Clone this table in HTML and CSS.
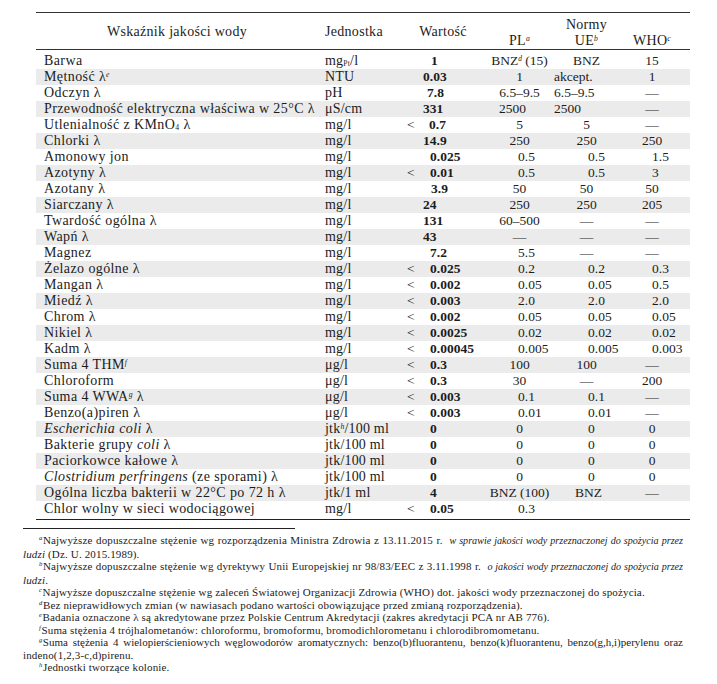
FILE: index.html
```html
<!DOCTYPE html>
<html lang="pl">
<head>
<meta charset="utf-8">
<title>Wskaźnik jakości wody</title>
<link rel="stylesheet" href="styles.css">
</head>
<body>
<div class="page">
<table class="tbl">
  <colgroup>
    <col class="w1"><col class="w2"><col class="w3"><col class="w4"><col class="w5"><col class="w6"><col class="w7">
  </colgroup>
  <thead>
    <tr class="h1">
      <th rowspan="2" class="hc">Wskaźnik jakości wody</th>
      <th rowspan="2" class="hl">Jednostka</th>
      <th rowspan="2" colspan="2" class="hc">Wartość</th>
      <th></th>
      <th class="hb">Normy</th>
      <th></th>
    </tr>
    <tr class="h2">
      <th class="ht">PL<sup>a</sup></th>
      <th class="ht">UE<sup>b</sup></th>
      <th class="ht who">WHO<sup>c</sup></th>
    </tr>
  </thead>
  <tbody>
    <tr><td>Barwa</td><td>mg<sub>Pt</sub>/l</td><td></td><td class="v p13">1</td><td class="c">BNZ<sup>d</sup> (15)</td><td class="c">BNZ</td><td class="c who">15</td></tr>
    <tr><td>Mętność λ<sup>e</sup></td><td>NTU</td><td></td><td class="v p5">0.03</td><td class="c">1</td><td class="u0">akcept.</td><td class="c who">1</td></tr>
    <tr><td>Odczyn λ</td><td>pH</td><td></td><td class="v p9">7.8</td><td class="c">6.5–9.5</td><td class="u0">6.5–9.5</td><td class="c who">—</td></tr>
    <tr><td>Przewodność elektryczna właściwa w 25°C λ</td><td>μS/cm</td><td></td><td class="v p5">331</td><td class="pl13">2500</td><td class="u0">2500</td><td class="c who">—</td></tr>
    <tr><td>Utlenialność z KMnO<sub>4</sub> λ</td><td>mg/l</td><td class="lt">&lt;</td><td class="v p11">0.7</td><td class="c">5</td><td class="c">5</td><td class="c who">—</td></tr>
    <tr><td>Chlorki λ</td><td>mg/l</td><td></td><td class="v p5">14.9</td><td class="c">250</td><td class="c">250</td><td class="c who">250</td></tr>
    <tr><td>Amonowy jon</td><td>mg/l</td><td></td><td class="v p12">0.025</td><td class="pl">0.5</td><td class="ul">0.5</td><td class="wl">1.5</td></tr>
    <tr><td>Azotyny λ</td><td>mg/l</td><td class="lt">&lt;</td><td class="v p12">0.01</td><td class="pl">0.5</td><td class="ul">0.5</td><td class="wl">3</td></tr>
    <tr><td>Azotany λ</td><td>mg/l</td><td></td><td class="v p13">3.9</td><td class="c">50</td><td class="c">50</td><td class="c who">50</td></tr>
    <tr><td>Siarczany λ</td><td>mg/l</td><td></td><td class="v p5">24</td><td class="c">250</td><td class="c">250</td><td class="c who">205</td></tr>
    <tr><td>Twardość ogólna λ</td><td>mg/l</td><td></td><td class="v p5">131</td><td class="c">60–500</td><td class="c">—</td><td class="c who">—</td></tr>
    <tr><td>Wapń λ</td><td>mg/l</td><td></td><td class="v p5">43</td><td class="c">—</td><td class="c">—</td><td class="c who">—</td></tr>
    <tr><td>Magnez</td><td>mg/l</td><td></td><td class="v p12">7.2</td><td class="pl">5.5</td><td class="c">—</td><td class="c who">—</td></tr>
    <tr><td>Żelazo ogólne λ</td><td>mg/l</td><td class="lt">&lt;</td><td class="v p12">0.025</td><td class="pl">0.2</td><td class="ul">0.2</td><td class="wl">0.3</td></tr>
    <tr><td>Mangan λ</td><td>mg/l</td><td class="lt">&lt;</td><td class="v p12">0.002</td><td class="pl">0.05</td><td class="ul">0.05</td><td class="wl">0.5</td></tr>
    <tr><td>Miedź λ</td><td>mg/l</td><td class="lt">&lt;</td><td class="v p12">0.003</td><td class="pl">2.0</td><td class="ul">2.0</td><td class="wl">2.0</td></tr>
    <tr><td>Chrom λ</td><td>mg/l</td><td class="lt">&lt;</td><td class="v p12">0.002</td><td class="pl">0.05</td><td class="ul">0.05</td><td class="wl">0.05</td></tr>
    <tr><td>Nikiel λ</td><td>mg/l</td><td class="lt">&lt;</td><td class="v p12">0.0025</td><td class="pl">0.02</td><td class="ul">0.02</td><td class="wl">0.02</td></tr>
    <tr><td>Kadm λ</td><td>mg/l</td><td class="lt">&lt;</td><td class="v p12">0.00045</td><td class="pl">0.005</td><td class="ul">0.005</td><td class="wl">0.003</td></tr>
    <tr><td>Suma 4 THM<sup>f</sup></td><td>μg/l</td><td class="lt">&lt;</td><td class="v p12">0.3</td><td class="c">100</td><td class="c">100</td><td class="c who">—</td></tr>
    <tr><td>Chloroform</td><td>μg/l</td><td class="lt">&lt;</td><td class="v p12">0.3</td><td class="c">30</td><td class="c">—</td><td class="c who">200</td></tr>
    <tr><td>Suma 4 WWA<sup>g</sup> λ</td><td>μg/l</td><td class="lt">&lt;</td><td class="v p12">0.003</td><td class="pl">0.1</td><td class="ul">0.1</td><td class="c who">—</td></tr>
    <tr><td>Benzo(a)piren λ</td><td>μg/l</td><td class="lt">&lt;</td><td class="v p12">0.003</td><td class="pl">0.01</td><td class="ul">0.01</td><td class="c who">—</td></tr>
    <tr><td><i>Escherichia coli</i> λ</td><td>jtk<sup>h</sup>/100 ml</td><td></td><td class="v p12">0</td><td class="c">0</td><td class="ul">0</td><td class="c who">0</td></tr>
    <tr><td>Bakterie grupy <i>coli</i> λ</td><td>jtk/100 ml</td><td></td><td class="v p12">0</td><td class="c">0</td><td class="ul">0</td><td class="c who">0</td></tr>
    <tr><td>Paciorkowce kałowe λ</td><td>jtk/100 ml</td><td></td><td class="v p12">0</td><td class="c">0</td><td class="ul">0</td><td class="c who">0</td></tr>
    <tr><td><i>Clostridium perfringens</i> (ze sporami) λ</td><td>jtk/100 ml</td><td></td><td class="v p12">0</td><td class="c">0</td><td class="ul">0</td><td class="c who">0</td></tr>
    <tr><td>Ogólna liczba bakterii w 22°C po 72 h λ</td><td>jtk/1 ml</td><td></td><td class="v p12">4</td><td class="c">BNZ (100)</td><td class="u22">BNZ</td><td class="c who">—</td></tr>
    <tr><td>Chlor wolny w sieci wodociągowej</td><td>mg/l</td><td class="lt">&lt;</td><td class="v p12">0.05</td><td class="pl">0.3</td><td></td><td></td></tr>
  </tbody>
</table>

<div class="notes">
  <p><span class="l1"><sup>a</sup>Najwyższe dopuszczalne stężenie wg rozporządzenia Ministra Zdrowia z 13.11.2015 r. &nbsp;<i class="it">w sprawie jakości wody przeznaczonej do spożycia przez</i></span><i>ludzi</i> (Dz. U. 2015.1989).</p>
  <p><span class="l1"><sup>b</sup>Najwyższe dopuszczalne stężenie wg dyrektywy Unii Europejskiej nr 98/83/EEC z 3.11.1998 r. &nbsp;<i class="it">o jakości wody przeznaczonej do spożycia przez</i></span><i>ludzi</i>.</p>
  <p><sup>c</sup>Najwyższe dopuszczalne stężenie wg zaleceń Światowej Organizacji Zdrowia (WHO) dot. jakości wody przeznaczonej do spożycia.</p>
  <p><sup>d</sup>Bez nieprawidłowych zmian (w nawiasach podano wartości obowiązujące przed zmianą rozporządzenia).</p>
  <p><sup>e</sup>Badania oznaczone λ są akredytowane przez Polskie Centrum Akredytacji (zakres akredytacji PCA nr AB 776).</p>
  <p><sup>f</sup>Suma stężenia 4 trójhalometanów: chloroformu, bromoformu, bromodichlorometanu i chlorodibromometanu.</p>
  <p><span class="l1 tight"><sup>g</sup>Suma stężenia 4 wielopierścieniowych węglowodorów aromatycznych: benzo(b)fluorantenu, benzo(k)fluorantenu, benzo(g,h,i)perylenu oraz</span>indeno(1,2,3-c,d)pirenu.</p>
  <p><sup>h</sup>Jednostki tworzące kolonie.</p>
</div>
</div>
</body>
</html>
```

FILE: styles.css
```css
html, body {
  margin: 0;
  padding: 0;
  background: #fff;
}
body {
  font-family: "Liberation Serif", "Times New Roman", serif;
  color: #1c1c1c;
}
.page {
  padding: 12px 0 0 23px;
  width: 667px;
}
.tbl {
  margin-left: 13px;
  width: 654px;
  border-collapse: collapse;
  table-layout: fixed;
  font-size: 13.5px;
  border-top: 1px solid #333;
  border-bottom: 1px solid #222;
}
.w1 { width: 282px; }
.w2 { width: 82px; }
.w3 { width: 18px; }
.w4 { width: 68px; }
.w5 { width: 67px; }
.w6 { width: 67px; }
.w7 { width: 70px; }

th {
  font-weight: normal;
  padding: 0;
  vertical-align: middle;
  font-size: 14px;
  letter-spacing: 0.3px;
}
.h1 { height: 19px; }
.h2 { height: 18px; }
thead tr.h2 th, thead tr.h1 th[rowspan] {
  border-bottom: 1.6px solid #333;
}
thead tr.h1 th[rowspan] { padding-top: 2px; }
.hc { text-align: center; }
.hl { text-align: left; padding-left: 7px; }
.hb { vertical-align: bottom; line-height: 14px; }
.ht { vertical-align: top; line-height: 16px; padding-top: 1px; }

td {
  padding: 0;
  height: 16px;
  line-height: 16px;
  white-space: nowrap;
  overflow: visible;
}
tbody tr:nth-child(even) td { background: #ebebeb; }
tbody tr td:first-child {
  padding-left: 8px;
  font-size: 14px;
  letter-spacing: 0.4px;
}
tbody tr td:nth-child(2) {
  padding-left: 7px;
  font-size: 14px;
  letter-spacing: 0.2px;
}
tbody tr:first-child td { padding-top: 3px; }
tbody tr:last-child td { padding-bottom: 2px; }

.lt { padding-left: 7px; }
.v { font-weight: bold; }
.p5 { padding-left: 5px; }
.p9 { padding-left: 9px; }
.p11 { padding-left: 11px; }
.p12 { padding-left: 12px; }
.p13 { padding-left: 13px; }
.c { text-align: center; }
.who { padding-right: 6px; }
.pl { padding-left: 32px; }
.pl13 { padding-left: 13px; }
.ul { padding-left: 35px; }
.u0 { padding-left: 1px; }
.u22 { padding-left: 22px; }
.wl { padding-left: 32px; }

sup, sub {
  font-size: 0.55em;
  line-height: 0;
}
sup { vertical-align: 0.55em; font-style: italic; }
sub { vertical-align: -0.1em; }

.notes {
  margin-top: 8px;
  border-top: 1px solid #222;
  width: 660px;
  padding-top: 5px;
  position: relative;
  font-size: 11px;
  line-height: 12.5px;
  letter-spacing: 0.15px;
}
.notes::before {
  content: "";
  position: absolute;
  top: -1px;
  left: 272px;
  right: 0;
  height: 1px;
  background: #fff;
}
.notes p {
  margin: 0;
  text-indent: 16px;
  text-align: justify;
}
.notes .l1 {
  display: block;
  text-align: justify;
  text-align-last: justify;
}
.notes .tight { letter-spacing: 0; }
.notes sup {
  font-size: 0.6em;
  vertical-align: 0.6em;
  margin-right: 0.5px;
}
.it { font-size: 0.92em; letter-spacing: 0; }
```
